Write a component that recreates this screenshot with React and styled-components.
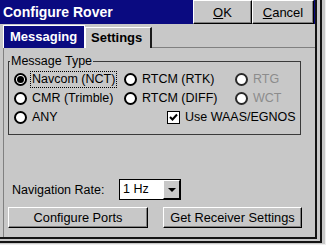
import React from "react";
import styled, { createGlobalStyle } from "styled-components";

const Global = createGlobalStyle`
  html, body {
    margin: 0;
    padding: 0;
    background: #c8c8c8;
  }
  body {
    font-family: "Liberation Sans", Arial, sans-serif;
  }
`;

const Screen = styled.div`
  width: 326px;
  height: 245px;
  box-sizing: border-box;
  background: #c8c8c8;
  border-right: 1px solid #ededed;
  border-bottom: 1px solid #ededed;
  padding: 0 3px 1px 0;
`;

const Bezel = styled.div`
  height: 100%;
  box-sizing: border-box;
  border-right: 2px solid #141414;
  border-bottom: 2px solid #141414;
  padding: 0 3px 2px 0;
`;

const Window = styled.div`
  height: 100%;
  box-sizing: border-box;
  border-right: 2px solid #141414;
  border-bottom: 2px solid #141414;
  display: flex;
  flex-direction: column;
  background: #c8c8c8;
`;

const TitleBar = styled.div`
  height: 24px;
  flex: none;
  display: flex;
  align-items: stretch;
  background: #0a0a80;
  padding-right: 1px;
`;

const Title = styled.div`
  flex: 1;
  color: #fff;
  font-weight: bold;
  font-size: 14px;
  line-height: 24px;
  padding-left: 3px;
`;

const TitleButton = styled.button`
  width: ${(p) => p.$w}px;
  height: 24px;
  box-sizing: border-box;
  margin: 0;
  padding: 0;
  background: #c8c8c8;
  border: 1px solid;
  border-color: #fff #000 #000 #fff;
  box-shadow: inset -1px -1px 0 #808080;
  font-family: inherit;
  font-size: 13px;
  color: #000;
  u {
    text-decoration: underline;
  }
`;

const TabStrip = styled.div`
  height: 24px;
  flex: none;
  display: flex;
  align-items: flex-end;
  padding-left: 3px;
`;

const Tab = styled.div`
  box-sizing: border-box;
  width: ${(p) => p.$w}px;
  height: ${(p) => (p.$active ? 23 : 21)}px;
  background: ${(p) => (p.$active ? "#0a0a80" : "#c8c8c8")};
  color: ${(p) => (p.$active ? "#fff" : "#000")};
  border-top: 1px solid #fff;
  border-left: 1px solid #fff;
  border-right: ${(p) => (p.$active ? "1px solid #fff" : "2px solid #1a1a1a")};
  font-weight: bold;
  font-size: 13px;
  line-height: ${(p) => (p.$active ? 21 : 19)}px;
  padding-left: ${(p) => (p.$active ? 6 : 5)}px;
`;

const TabFill = styled.div`
  flex: 1;
  height: 1px;
  background: #808080;
`;

const Panel = styled.div`
  flex: 1;
  margin-left: 3px;
  border-left: 1px solid #808080;
  padding: 0 0 0 4px;
  display: flex;
  flex-direction: column;
`;

const Group = styled.fieldset`
  margin: 6px 0 0 0;
  width: 293px;
  box-sizing: border-box;
  border: 1px solid #3a3a3a;
  padding: 2px 0 7px 5px;
`;

const Legend = styled.legend`
  font-size: 12.5px;
  line-height: 14px;
  padding: 0 1px;
  margin-left: -4px;
  color: #000;
`;

const OptionGrid = styled.div`
  display: grid;
  grid-template-columns: 110px 111px 1fr;
  grid-auto-rows: 19px;
`;

const Option = styled.label`
  display: flex;
  align-items: center;
  font-size: 12.5px;
  color: ${(p) => (p.$disabled ? "#8c8c8c" : "#000")};
  grid-column: ${(p) => p.$span || "auto"};
  padding-left: ${(p) => p.$indent || 0}px;
  white-space: nowrap;
`;

const Radio = styled.span`
  width: 13px;
  height: 13px;
  box-sizing: border-box;
  border-radius: 50%;
  border: 2px solid ${(p) => (p.$disabled ? "#2a2a2a" : "#000")};
  background: #fff;
  display: flex;
  align-items: center;
  justify-content: center;
  flex: none;
  &::after {
    content: "";
    width: 7px;
    height: 7px;
    border-radius: 50%;
    background: ${(p) => (p.$checked ? "#000" : "transparent")};
  }
`;

const Check = styled.span`
  width: 13px;
  height: 13px;
  box-sizing: border-box;
  border: 1px solid #000;
  background: #fff;
  display: flex;
  align-items: center;
  justify-content: center;
  flex: none;
`;

const Caption = styled.span`
  margin-left: 3px;
  padding: 1px;
  line-height: 13px;
  border: 1px dotted ${(p) => (p.$focused ? "#000" : "transparent")};
`;

const RateRow = styled.div`
  display: flex;
  align-items: center;
  margin-top: 44px;
  height: 21px;
  padding-left: 4px;
`;

const RateLabel = styled.span`
  font-size: 12.5px;
  width: 107px;
`;

const Select = styled.div`
  width: 62px;
  height: 21px;
  box-sizing: border-box;
  border: 1px solid #000;
  background: #fff;
  display: flex;
  font-size: 12.5px;
`;

const SelectValue = styled.span`
  flex: 1;
  line-height: 19px;
  padding-left: 3px;
`;

const DropButton = styled.span`
  width: 17px;
  box-sizing: border-box;
  background: #c8c8c8;
  border: 1px solid;
  border-color: #fff #000 #000 #fff;
  display: flex;
  align-items: center;
  justify-content: center;
  &::after {
    content: "";
    border-left: 4px solid transparent;
    border-right: 4px solid transparent;
    border-top: 4px solid #000;
  }
`;

const ButtonRow = styled.div`
  display: flex;
  gap: 15px;
  margin-top: 7px;
`;

const Button = styled.button`
  width: ${(p) => p.$w}px;
  height: 21px;
  box-sizing: border-box;
  margin: 0;
  padding: 0;
  background: #c8c8c8;
  border: 1px solid;
  border-color: #fff #000 #000 #fff;
  box-shadow: inset -1px -1px 0 #808080;
  font-family: inherit;
  font-size: 12.8px;
  color: #000;
`;

const options = [
  { label: "Navcom (NCT)", checked: true, focused: true },
  { label: "RTCM (RTK)" },
  { label: "RTG", disabled: true },
  { label: "CMR (Trimble)" },
  { label: "RTCM (DIFF)" },
  { label: "WCT", disabled: true },
  { label: "ANY" },
];

export default function App() {
  return (
    <>
      <Global />
      <Screen>
        <Bezel>
          <Window>
            <TitleBar>
              <Title>Configure Rover</Title>
              <TitleButton $w={59}>
                <u>O</u>K
              </TitleButton>
              <TitleButton $w={62}>
                <u>C</u>ancel
              </TitleButton>
            </TitleBar>
            <TabStrip>
              <Tab $active $w={82}>Messaging</Tab>
              <Tab $w={67}>Settings</Tab>
              <TabFill />
            </TabStrip>
            <Panel>
              <Group>
                <Legend>Message Type</Legend>
                <OptionGrid>
                  {options.map((o) => (
                    <Option key={o.label} $disabled={o.disabled}>
                      <Radio $checked={o.checked} $disabled={o.disabled} />
                      <Caption $focused={o.focused}>{o.label}</Caption>
                    </Option>
                  ))}
                  <Option $span="2 / 4" $indent={43}>
                    <Check>
                      <svg width="9" height="9" viewBox="0 0 9 9">
                        <path d="M1 4 L3.5 6.5 L8 1.5" fill="none" stroke="#000" strokeWidth="2" />
                      </svg>
                    </Check>
                    <Caption>Use WAAS/EGNOS</Caption>
                  </Option>
                </OptionGrid>
              </Group>
              <RateRow>
                <RateLabel>Navigation Rate:</RateLabel>
                <Select>
                  <SelectValue>1 Hz</SelectValue>
                  <DropButton />
                </Select>
              </RateRow>
              <ButtonRow>
                <Button $w={140}>Configure Ports</Button>
                <Button $w={139}>Get Receiver Settings</Button>
              </ButtonRow>
            </Panel>
          </Window>
        </Bezel>
      </Screen>
    </>
  );
}
